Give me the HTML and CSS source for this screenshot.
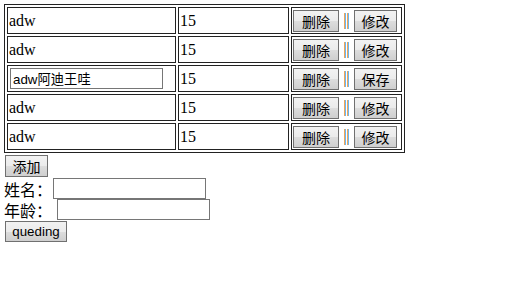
FILE: index.html
```html
<!DOCTYPE html>
<html>
<head>
<meta charset="utf-8">
<link rel="stylesheet" href="styles.css">
</head>
<body>
<table class="list">
  <tr>
    <td class="c-name">adw</td>
    <td class="c-age">15</td>
    <td class="c-ops"><div class="ops"><button class="btn btn-del">删除</button><span class="sep"><i></i><i></i></span><button class="btn btn-edit">修改</button></div></td>
  </tr>
  <tr>
    <td class="c-name">adw</td>
    <td class="c-age">15</td>
    <td class="c-ops"><div class="ops"><button class="btn btn-del">删除</button><span class="sep"><i></i><i></i></span><button class="btn btn-edit">修改</button></div></td>
  </tr>
  <tr>
    <td class="c-name"><input class="edit-input" type="text" value="adw阿迪王哇"></td>
    <td class="c-age">15</td>
    <td class="c-ops"><div class="ops"><button class="btn btn-del">删除</button><span class="sep"><i></i><i></i></span><button class="btn btn-edit">保存</button></div></td>
  </tr>
  <tr>
    <td class="c-name">adw</td>
    <td class="c-age">15</td>
    <td class="c-ops"><div class="ops"><button class="btn btn-del">删除</button><span class="sep"><i></i><i></i></span><button class="btn btn-edit">修改</button></div></td>
  </tr>
  <tr>
    <td class="c-name">adw</td>
    <td class="c-age">15</td>
    <td class="c-ops"><div class="ops"><button class="btn btn-del">删除</button><span class="sep"><i></i><i></i></span><button class="btn btn-edit">修改</button></div></td>
  </tr>
</table>
<div class="add-row"><button class="btn btn-add">添加</button></div>
<div class="field field-name"><span class="label">姓名：</span><input class="field-input" type="text"></div>
<div class="field field-age"><span class="label">年龄：</span><input class="field-input" type="text"></div>
<div class="ok-row"><button class="btn btn-ok">queding</button></div>
</body>
</html>
```
FILE: styles.css
```css
html, body {
  margin: 0;
  padding: 0;
  background: #ffffff;
}
body {
  padding: 4px 0 0 4px;
  font-family: "Liberation Serif", "Noto Sans CJK SC", serif;
  font-size: 16px;
  color: #000;
}
.list {
  box-sizing: border-box;
  width: 401px;
  table-layout: fixed;
  border-collapse: separate;
  border-spacing: 2px;
  border: 1px solid #222;
  margin: 0;
}
.list tr {
  height: 27px;
}
.list td {
  box-sizing: border-box;
  border: 1px solid #222;
  padding: 1px;
  vertical-align: middle;
  line-height: 18px;
  white-space: nowrap;
  overflow: hidden;
}
.c-name { width: 169px; }
.c-age { width: 111px; }
.c-ops { width: 111px; }
.ops {
  display: flex;
  align-items: center;
  height: 23px;
}
.btn {
  box-sizing: border-box;
  height: 22px;
  margin: 0;
  padding: 0;
  border: 1px solid #707070;
  border-radius: 0;
  background: linear-gradient(#f2f2f2, #ebebeb 50%, #dddddd 50%, #cfcfcf);
  font-family: "Noto Sans CJK SC", "Liberation Sans", sans-serif;
  font-size: 14px;
  line-height: 18px;
  color: #000;
  cursor: default;
}
.btn-del { width: 46px; }
.btn-edit { width: 43px; }
.sep {
  display: flex;
  gap: 1px;
  margin: 0 5px 0 5px;
  height: 16px;
}
.sep i {
  display: block;
  width: 2px;
  height: 16px;
  background: linear-gradient(90deg, #f0a65a 50%, #6cb7f0 50%);
}
.edit-input {
  box-sizing: border-box;
  display: block;
  width: 153px;
  height: 21px;
  margin: 0 0 0 1px;
  padding: 0 2px;
  border: 1px solid #767676;
  font-family: "Liberation Sans", "Noto Sans CJK SC", sans-serif;
  font-size: 13.33px;
  color: #000;
  outline: none;
}
.add-row {
  margin: 2px 0 0 1px;
  height: 22px;
}
.btn-add { width: 43px; }
.field {
  display: flex;
  align-items: center;
  height: 21px;
  font-family: "Noto Sans CJK SC", sans-serif;
  font-size: 16px;
  line-height: 20px;
}
.field-name { margin-top: 1px; }
.field-name .field-input { margin-left: 1px; }
.field-age .field-input { margin-left: 5px; }
.label {
  width: 48px;
  white-space: nowrap;
}
.field-input {
  box-sizing: border-box;
  width: 153px;
  height: 21px;
  margin: 0;
  padding: 0 2px;
  border: 1px solid #767676;
  background: #fff;
  outline: none;
}
.ok-row {
  margin: 1px 0 0 1px;
}
.btn-ok {
  width: 62px;
  height: 21px;
  font-family: "Liberation Sans", sans-serif;
  font-size: 13.33px;
}
```
